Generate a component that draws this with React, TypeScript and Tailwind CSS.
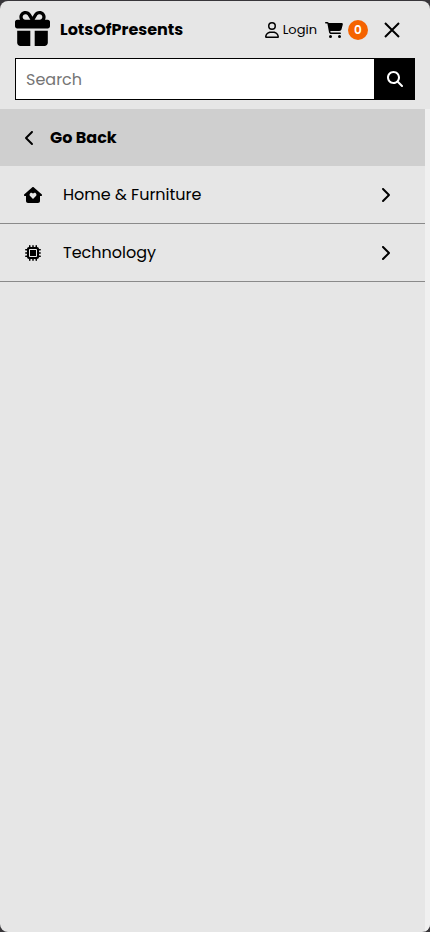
import React from 'react';
import {
  FaGift,
  FaMicrochip,
  FaRegUser,
  FaCartShopping,
  FaMagnifyingGlass,
  FaChevronRight,
  FaChevronLeft,
} from 'react-icons/fa6';

function HouseHeart({ className }: { className?: string }) {
  return (
    <svg viewBox="0 0 576 512" fill="currentColor" fillRule="evenodd" className={className} aria-hidden="true">
      <path d="M309 8c-12-11-30-11-42 0L11 232c-10 9-14 23-9 36s17 20 30 20h32v160c0 35 29 64 64 64h320c35 0 64-29 64-64V288h32c13 0 25-8 30-20s1-27-9-36L309 8zM288 384l-93-93c-25-25-24-67 5-91 25-21 61-16 83 7l5 6 5-6c22-23 58-28 83-7 29 24 30 66 5 91l-93 93z" />
    </svg>
  );
}

function Cross({ className }: { className?: string }) {
  return (
    <svg viewBox="0 0 16 16" fill="none" stroke="currentColor" strokeWidth="2" className={className} aria-hidden="true">
      <path d="M1 1l14 14M15 1L1 15" />
    </svg>
  );
}

const categories = [
  { label: 'Home & Furniture', icon: <HouseHeart className="h-4 w-[18px]" /> },
  { label: 'Technology', icon: <FaMicrochip className="size-4" aria-hidden="true" /> },
];

function Header() {
  return (
    <header className="px-[15px] pt-2 pb-[9px]">
      <div className="flex h-[42px] items-center">
        <a href="#home" className="flex items-center gap-2.5">
          <FaGift className="mb-1 size-[35px]" aria-hidden="true" />
          <span className="text-base font-bold">LotsOfPresents</span>
        </a>
        <div className="ml-auto flex items-center gap-2">
          <a href="#login" className="flex items-center gap-1 text-[13px]">
            <FaRegUser className="h-4 w-3.5" aria-hidden="true" />
            Login
          </a>
          <a href="#cart" aria-label="Cart" className="flex items-center gap-[5px]">
            <FaCartShopping className="h-4 w-[18px]" aria-hidden="true" />
            <span className="flex size-5 items-center justify-center rounded-full bg-[#f56300] text-xs font-semibold text-white">
              0
            </span>
          </a>
          <button type="button" aria-label="Close menu" className="mr-[7px] flex size-8 items-center justify-center">
            <Cross className="size-4" />
          </button>
        </div>
      </div>
      <form role="search" className="mt-[7px] flex h-[42px]">
        <input
          type="search"
          aria-label="Search"
          placeholder="Search"
          className="min-w-0 flex-1 border border-r-0 border-black bg-white px-2.5 pt-0.5 text-base outline-none placeholder:text-[#757575]"
        />
        <button type="submit" aria-label="Submit search" className="flex w-[41px] items-center justify-center bg-black text-white">
          <FaMagnifyingGlass className="size-4" aria-hidden="true" />
        </button>
      </form>
    </header>
  );
}

export default function App() {
  return (
    <div className="min-h-screen bg-[#38363a] pt-px font-['Poppins','Inter',sans-serif] text-black">
      <div className="flex min-h-[calc(100vh-1px)] flex-col overflow-hidden rounded-lg bg-[#e6e6e6]">
        <Header />
        <div className="flex flex-1 border-r-[5px] border-[#f0f0f0]">
          <nav aria-label="Categories" className="flex-1">
            <button type="button" className="flex h-[57px] w-full items-center gap-3 bg-[#cfcfcf] px-[22px] text-base font-bold">
              <FaChevronLeft className="size-4" aria-hidden="true" />
              Go Back
            </button>
            <ul>
              {categories.map(({ label, icon }) => (
                <li key={label} className="border-b border-[#8a8a8a]">
                  <a href="#category" className="flex h-[57px] items-center pr-8 pl-6 text-base">
                    <span className="mr-[21px] flex w-[18px] justify-center">{icon}</span>
                    <span>{label}</span>
                    <FaChevronRight className="ml-auto size-4" aria-hidden="true" />
                  </a>
                </li>
              ))}
            </ul>
          </nav>
        </div>
      </div>
    </div>
  );
}
